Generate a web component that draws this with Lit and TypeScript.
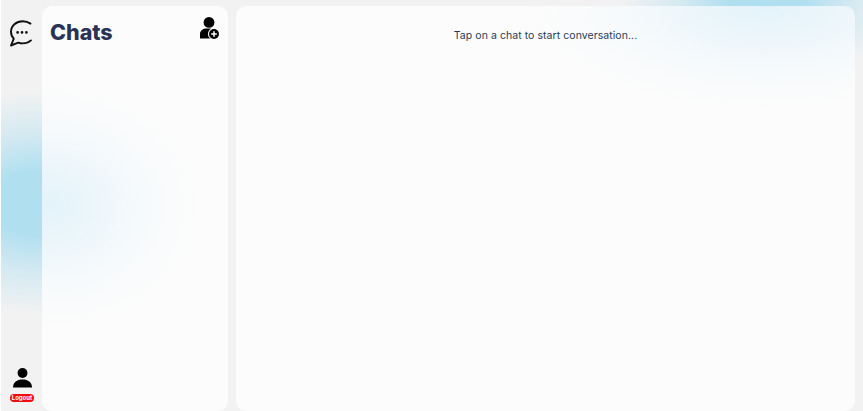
import { LitElement, html, css } from "lit";
import { customElement } from "lit/decorators.js";

@customElement("app-root")
export class AppRoot extends LitElement {
  static styles = css`
    :host {
      display: block;
      height: 411px;
      overflow: hidden;
      font-family: Inter, "Liberation Sans", sans-serif;
    }
    .page {
      box-sizing: border-box;
      height: 411px;
      margin-left: 1px;
      padding: 6px 8px 0 0;
      display: grid;
      grid-template-columns: 41px 186px 1fr;
      background-color: #f2f2f2;
      background-image:
        radial-gradient(ellipse 170px 112px at 40px 203px, #b0dff0 0%, #b0dff0 28%, rgba(176, 223, 240, 0.45) 62%, rgba(176, 223, 240, 0) 100%),
        radial-gradient(ellipse 150px 76px at 765px 0px, #b0dff0 0%, #b0dff0 25%, rgba(176, 223, 240, 0.4) 60%, rgba(176, 223, 240, 0) 100%);
    }
    .rail {
      display: flex;
      flex-direction: column;
      align-items: center;
      justify-content: space-between;
      padding: 14px 0 9px;
    }
    .rail-bottom {
      display: flex;
      flex-direction: column;
      align-items: center;
      gap: 6px;
      margin-left: 1px;
    }
    .panel {
      border-radius: 10px;
      min-height: 0;
    }
    .list {
      display: flex;
      align-items: flex-start;
      justify-content: space-between;
      padding: 10px 9px 0 8px;
      background:
        radial-gradient(ellipse 150px 125px at 8px 200px, rgba(170, 222, 246, 0.3) 0%, rgba(170, 222, 246, 0.2) 30%, rgba(170, 222, 246, 0.07) 60%, rgba(170, 222, 246, 0) 100%),
        #fcfcfc;
    }
    .main {
      margin-left: 8px;
      display: flex;
      justify-content: center;
      padding-top: 22px;
      background:
        radial-gradient(ellipse 240px 105px at 530px 0px, rgba(170, 222, 246, 0.3) 0%, rgba(170, 222, 246, 0.2) 30%, rgba(170, 222, 246, 0.07) 60%, rgba(170, 222, 246, 0) 100%),
        #fcfcfc;
    }
    .title {
      margin: 0;
      font-size: 21.5px;
      line-height: 32px;
      font-weight: 800;
      color: #2a3356;
    }
    .add {
      margin-top: 1px;
    }
    .hint {
      margin: 0;
      font-size: 10.5px;
      line-height: 16px;
      color: #2a3a58;
      font-weight: 400;
      letter-spacing: 0.06px;
    }
    .logout {
      display: block;
      width: 24px;
      height: 8px;
      line-height: 8px;
      border-radius: 4px;
      background: #f40b0b;
      color: #fff;
      font-size: 6px;
      font-weight: 700;
      text-align: center;
    }
    .bubble {
      margin-left: -1px;
    }
    svg { display: block; }
  `;

  render() {
    return html`
      <div class="page">
        <nav class="rail">
          <svg class="bubble" width="26" height="28" viewBox="0 0 26 28" fill="none" stroke="#111" stroke-width="1.9" stroke-linecap="round" stroke-linejoin="round">
            <path d="M22.5 3.6C20.2 2 17.6 1.2 14.8 1.2C8.2 1.2 3 5.7 3 11.8C3 14.6 4 16.9 5.8 18.6L3 25.5L10.2 22.6C11.6 23.1 13.1 23.4 14.8 23.4C18 23.4 20.8 22.3 23 20.4"></path>
            <circle cx="9.6" cy="12.4" r="1.3" fill="#111" stroke="none"></circle>
            <circle cx="14" cy="12.4" r="1.3" fill="#111" stroke="none"></circle>
            <circle cx="18.4" cy="12.4" r="1.3" fill="#111" stroke="none"></circle>
          </svg>
          <div class="rail-bottom">
            <svg width="19" height="20" viewBox="0 0 20 21" fill="#000">
              <circle cx="10" cy="5.2" r="5.2"></circle>
              <path d="M0 20.5C0 14.8 4.2 12 10 12S20 14.8 20 20.5Z"></path>
            </svg>
            <span class="logout">Logout</span>
          </div>
        </nav>
        <section class="panel list">
          <h1 class="title">Chats</h1>
          <svg class="add" width="19" height="22" viewBox="0 0 19 22" fill="#000">
            <circle cx="9" cy="5.4" r="5.4"></circle>
            <path d="M0 21.5V17C0 13.5 3 11.5 7 11.5H11C9 13 8 15 8 17C8 19 9 20.6 10.5 21.5Z"></path>
            <circle cx="14" cy="17" r="5"></circle>
            <path d="M14 14.2V19.8M11.2 17H16.8" stroke="#fff" stroke-width="1.5"></path>
          </svg>
        </section>
        <section class="panel main">
          <p class="hint">Tap on a chat to start conversation...</p>
        </section>
      </div>
    `;
  }
}
